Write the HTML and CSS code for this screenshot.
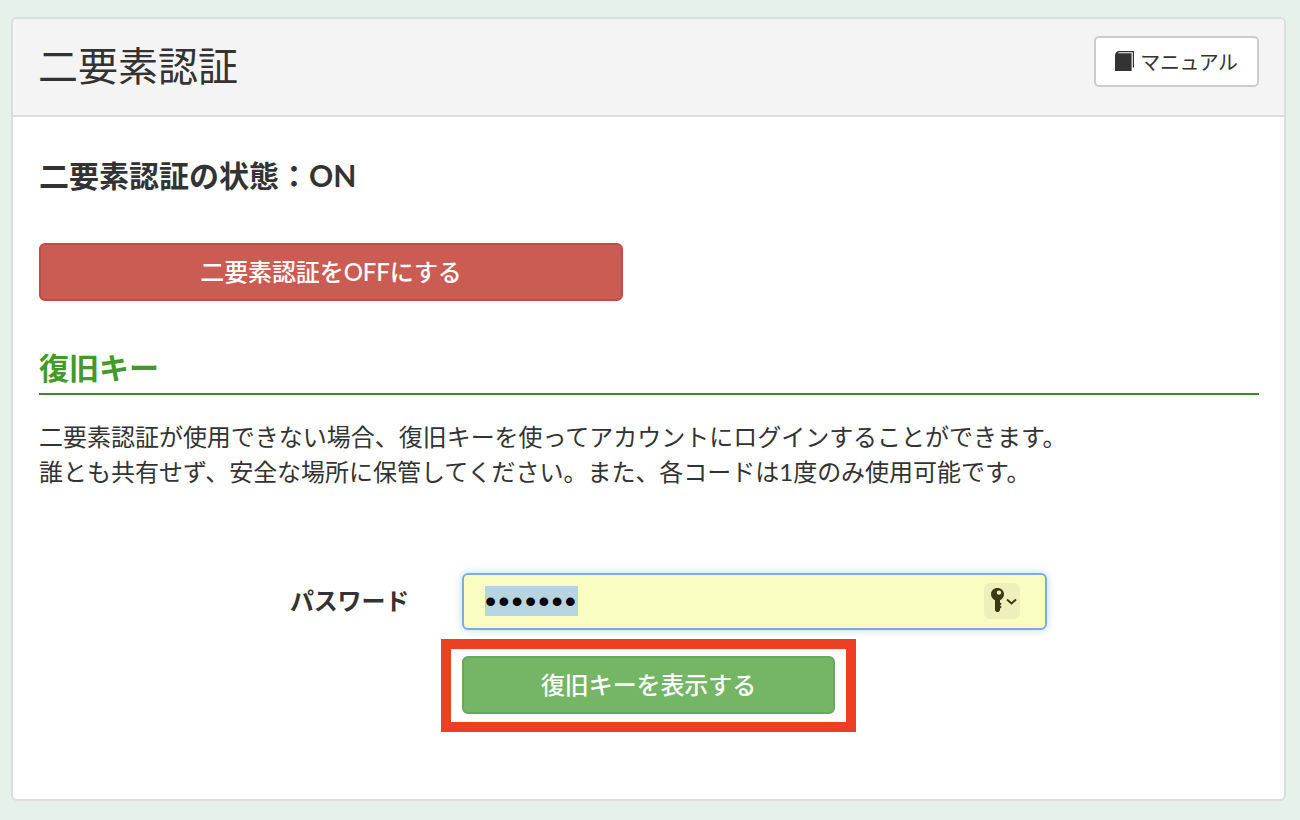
FILE: index.html
```html
<!DOCTYPE html>
<html lang="ja">
<head>
    <meta charset="UTF-8">
    <meta name="viewport" content="width=device-width, initial-scale=1.0">
    <title>二要素認証</title>
    <link rel="stylesheet" href="styles.css">
</head>
<body>
    <div class="panel">
        <div class="panel-head">
            <h1 class="panel-title">二要素認証</h1>
            <a class="manual-btn" href="#">
                <svg class="book-icon" width="19" height="20" viewBox="0 0 19 20">
                    <path d="M4.5 0H19V16.5H17.8V1.2H5C4 1.2 3.2 1.6 2.8 2.2H16.6V20H0V4.5C0 1.8 1.8 0 4.5 0Z" fill="#333"/>
                </svg>
                マニュアル
            </a>
        </div>
        <div class="panel-body">
            <h2 class="status">二要素認証の状態：ON</h2>
            <button class="btn btn-off">二要素認証をOFFにする</button>
            <h3 class="section-title">復旧キー</h3>
            <p class="desc">二要素認証が使用できない場合、復旧キーを使ってアカウントにログインすることができます。<br>誰とも共有せず、安全な場所に保管してください。また、各コードは1度のみ使用可能です。</p>
            <div class="form-row">
                <label class="form-label" for="password">パスワード</label>
                <div class="pw-field">
                    <span class="pw-value" id="password">•••••••</span>
                    <span class="key-btn">
                        <svg width="36" height="36" viewBox="0 0 36 36">
                            <path fill-rule="evenodd" d="M13.5 5C17.2 5 20 7.7 20 11.3 20 14 18.4 16.2 16 17.2V19.4L17.8 20.8 16 22.4 17.8 24 16 25.6V27.6L14.4 29H12.6L11 27.4V17.2C8.6 16.2 7 14 7 11.3 7 7.7 9.8 5 13.5 5ZM15 7.4A2.2 2.2 0 1 0 15 11.8 2.2 2.2 0 1 0 15 7.4Z" fill="#3b3a12"/>
                            <path d="M23 16.5L27.5 20.5 32 16.5" fill="none" stroke="#3b3a12" stroke-width="2"/>
                        </svg>
                    </span>
                </div>
            </div>
            <div class="highlight">
                <button class="btn btn-show">復旧キーを表示する</button>
            </div>
        </div>
    </div>
</body>
</html>
```

FILE: styles.css
```css
* {
    box-sizing: border-box;
}
body {
    margin: 0;
    height: 820px;
    overflow: hidden;
    padding: 17px 14px 0 11px;
    background-color: #e6f1e9;
    color: #333;
    font-family: Lato, "Noto Sans CJK JP", sans-serif;
}
.panel {
    height: 784px;
    background-color: #fff;
    border: 2px solid #ddd;
    border-radius: 6px;
    overflow: hidden;
}
.panel-head {
    height: 98px;
    background-color: #f4f4f4;
    border-bottom: 2px solid #ddd;
    padding: 17px 25px 0 25px;
    display: flex;
    justify-content: space-between;
    align-items: flex-start;
}
.panel-title {
    margin: 0;
    font-size: 40px;
    line-height: 60px;
    font-weight: 400;
}
.manual-btn {
    width: 165px;
    height: 51px;
    padding-bottom: 1px;
    background-color: #fff;
    border: 2px solid #ccc;
    border-radius: 5px;
    display: flex;
    align-items: center;
    justify-content: center;
    gap: 6px;
    color: #333;
    font-size: 20px;
    letter-spacing: -0.4px;
    text-decoration: none;
}
.book-icon {
    flex: none;
}
.panel-body {
    padding: 0 25px 0 26px;
}
.status {
    margin: 36px 0 0;
    font-size: 30px;
    line-height: 44px;
    font-weight: 700;
}
.btn {
    display: block;
    height: 58px;
    padding: 0 0 4px;
    border-radius: 6px;
    color: #fff;
    font-family: inherit;
    font-size: 24px;
    font-weight: 500;
    letter-spacing: -0.1px;
    cursor: pointer;
}
.btn-off {
    width: 584px;
    margin-top: 46px;
    background-color: #cb5c54;
    border: 2px solid #c34b43;
}
.section-title {
    margin: 46px 0 0;
    height: 48px;
    border-bottom: 2px solid #3c8c23;
    color: #439a2a;
    font-size: 30px;
    line-height: 40px;
    font-weight: 700;
}
.desc {
    margin: 24px 0 0;
    font-size: 24px;
    line-height: 35px;
    letter-spacing: -0.02px;
}
.form-row {
    display: flex;
    align-items: center;
    margin-top: 84px;
    height: 57px;
}
.form-label {
    width: 370px;
    padding-bottom: 5px;
    text-align: right;
    font-size: 24px;
    font-weight: 700;
    letter-spacing: -0.2px;
}
.pw-field {
    width: 585px;
    height: 57px;
    margin-left: 53px;
    background-color: #fafdc2;
    border: 2px solid #7aade0;
    border-radius: 6px;
    box-shadow: 0 0 10px rgba(122, 173, 224, 0.45);
    display: flex;
    align-items: center;
    justify-content: space-between;
    padding: 0 25px 0 21px;
}
.pw-value {
    background-color: #b7d5e0;
    color: #000;
    font-family: "Liberation Sans", sans-serif;
    font-size: 32px;
    line-height: 30px;
    letter-spacing: 2.1px;
    margin-top: -1px;
}
.key-btn {
    width: 36px;
    height: 36px;
    margin-top: -1px;
    background-color: #eef0bb;
    border-radius: 6px;
    display: flex;
    align-items: center;
    justify-content: center;
}
.highlight {
    width: 415px;
    height: 93px;
    margin: 9px 0 0 402px;
    border: 10px solid #ee3e23;
    padding: 7px 0 0 11px;
}
.btn-show {
    width: 373px;
    background-color: #74b566;
    border: 2px solid #68aa5a;
}
```
